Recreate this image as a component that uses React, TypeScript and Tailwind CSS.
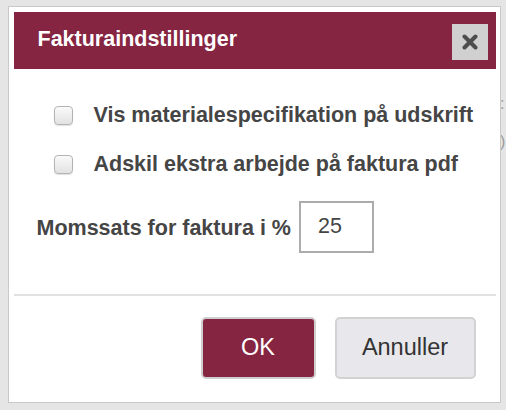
import React, { useState } from 'react';

const CheckRow: React.FC<{ label: string; checked: boolean; onToggle: () => void; className?: string }> = ({ label, checked, onToggle, className }) => (
  <label className={`flex items-center h-[30px] pl-[40px] gap-[21px] cursor-pointer ${className || ''}`}>
    <input
      type="checkbox"
      checked={checked}
      onChange={onToggle}
      className="appearance-none w-[19px] h-[19px] rounded-[4px] border border-[#b4b4b4] bg-gradient-to-b from-[#fafafa] to-[#e2e2e2] shadow-[0_1px_1px_rgba(0,0,0,0.12)] checked:bg-[#862541]"
    />
    <span className="text-[21.5px] font-bold text-[#454545] leading-none">{label}</span>
  </label>
);

const App: React.FC = () => {
  const [showSpec, setShowSpec] = useState(false);
  const [splitExtra, setSplitExtra] = useState(false);
  const [vat, setVat] = useState('25');

  return (
    <div className="relative w-[506px] h-[410px] bg-[#e5e5e5] overflow-hidden pt-[6px] pl-[8px]" style={{ fontFamily: '"Liberation Sans", Arial, sans-serif' }}>
      {/* bits of the page behind the dialog */}
      <span className="absolute left-[500px] top-[92px] text-[16px] text-[#9a9a9a]">:</span>
      <span className="absolute left-[500px] top-[130px] text-[16px] text-[#9a9a9a]">)</span>

      <div className="relative w-[493px] h-[397px] bg-white border-[1.5px] border-[#c9c9c9] p-[4.5px]">
        <div className="h-[57px] bg-[#862541] flex items-center justify-between pl-[24px] pr-[8px]">
          <span className="text-white font-bold text-[21.5px] leading-none">Fakturaindstillinger</span>
          <button className="w-[36px] h-[36px] bg-[#d0d0d0] flex items-center justify-center mt-[3px]">
            <svg width="16" height="16" viewBox="0 0 16 16">
              <path d="M2.5 2.5 L13.5 13.5 M13.5 2.5 L2.5 13.5" stroke="#4d4d4d" strokeWidth="4" strokeLinecap="round" />
            </svg>
          </button>
        </div>

        <div className="h-[225px] pt-[32px]">
          <CheckRow label="Vis materialespecifikation på udskrift" checked={showSpec} onToggle={() => setShowSpec(!showSpec)} />
          <CheckRow label="Adskil ekstra arbejde på faktura pdf" checked={splitExtra} onToggle={() => setSplitExtra(!splitExtra)} className="mt-[19px]" />
          <div className="flex items-center mt-[21px] pl-[23px] gap-[8px]">
            <span className="text-[21.5px] font-bold text-[#454545] leading-none mt-[5px]">Momssats for faktura i %</span>
            <input
              value={vat}
              onChange={e => setVat(e.target.value)}
              className="w-[75px] h-[52px] border-2 border-[#acacac] pl-[17px] text-[21.5px] text-[#454545] outline-none"
            />
          </div>
        </div>

        <div className="h-[2px] bg-[#e1e1e1]" />

        <div className="flex justify-end gap-[19px] pt-[21px] pr-[20px]">
          <button className="w-[115px] h-[62px] bg-[#862541] border-2 border-[#cfcfcf] rounded-[5px] text-white text-[23.5px]">OK</button>
          <button className="w-[141px] h-[62px] bg-[#e8e8ec] border-2 border-[#d2d2d2] rounded-[5px] text-[#333] text-[23.5px]">Annuller</button>
        </div>
      </div>
    </div>
  );
};

export default App;
